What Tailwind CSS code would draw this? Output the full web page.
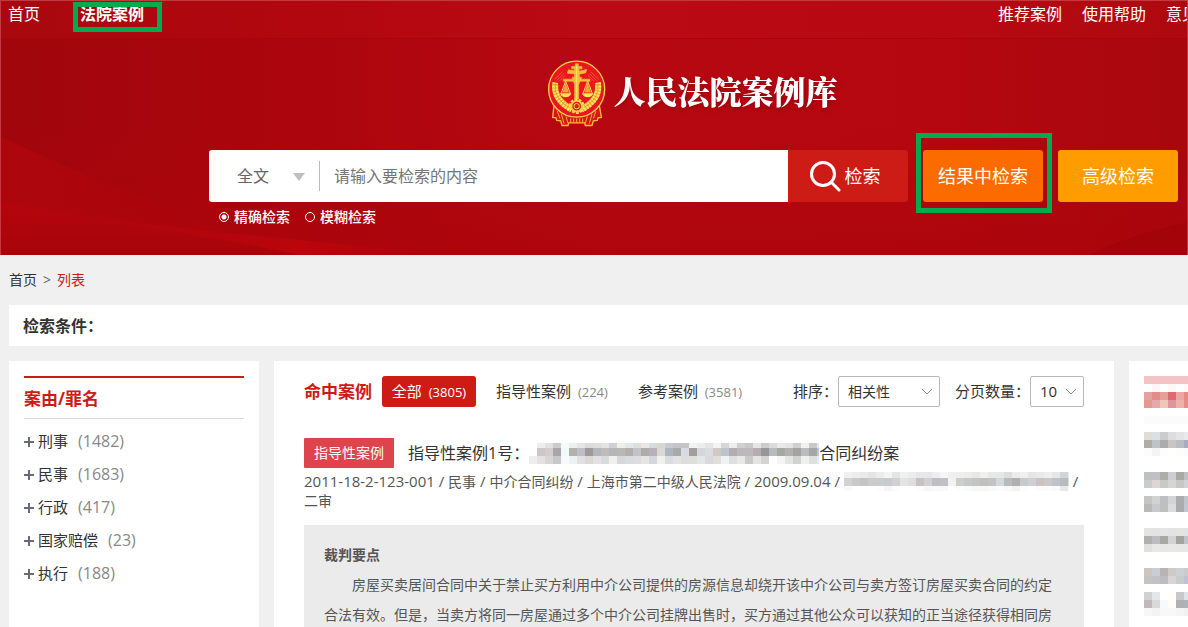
<!DOCTYPE html>
<html lang="zh-CN">
<head>
<meta charset="utf-8">
<meta name="viewport" content="width=device-width, initial-scale=1">
<title>人民法院案例库</title>
<script src="https://cdn.jsdelivr.net/npm/@tailwindcss/browser@4"></script>
</head>
<body class="flex h-screen flex-col overflow-hidden bg-[#f0f0f0] font-['Open_Sans','Noto_Sans_CJK_SC',sans-serif] text-[#333]">

<header class="relative h-[255px] shrink-0 overflow-hidden border-t border-x border-[#c13a40] bg-[#b20710] text-white">
  <svg class="absolute inset-0 h-full w-full" viewBox="0 0 1188 255" preserveAspectRatio="none" aria-hidden="true">
    <defs>
      <linearGradient id="base" x1="0" y1="0" x2="1" y2="0">
        <stop offset="0" stop-color="#a0060c"/><stop offset=".25" stop-color="#ac050d"/><stop offset=".5" stop-color="#b70812"/><stop offset=".8" stop-color="#b40710"/><stop offset="1" stop-color="#a8070e"/>
      </linearGradient>
      <linearGradient id="fall" x1="0" y1="0" x2="0" y2="1">
        <stop offset=".5" stop-color="#ab040b" stop-opacity="0"/><stop offset="1" stop-color="#ab040b" stop-opacity=".7"/>
      </linearGradient>
      <linearGradient id="fold" x1="0" y1="0" x2="1" y2="0">
        <stop offset="0" stop-color="#ae060d"/><stop offset="1" stop-color="#b0040b" stop-opacity="0"/>
      </linearGradient>
      <linearGradient id="fold2" x1="0" y1="0" x2="0" y2="1">
        <stop offset="0" stop-color="#b5050c"/><stop offset="1" stop-color="#a6050a"/>
      </linearGradient>
      <linearGradient id="fold3" x1="0" y1="0" x2="1" y2="0">
        <stop offset="0" stop-color="#b8050c" stop-opacity="0"/><stop offset=".6" stop-color="#ba050c"/><stop offset="1" stop-color="#b4050c" stop-opacity="0"/>
      </linearGradient>
    </defs>
    <rect width="1188" height="255" fill="url(#base)"/>
    <rect width="1188" height="255" fill="url(#fall)"/>
    <path d="M0 137Q90 178 190 217L290 255H0Z" fill="url(#fold)"/>
    <path d="M0 203Q120 222 240 236T440 255H0Z" fill="url(#fold2)"/>
    <path d="M60 213Q240 236 460 255H300Q200 234 60 213Z" fill="url(#fold3)"/>
    <path d="M1188 222Q1130 235 1090 255H1188Z" fill="#a2040a"/>
  </svg>

  <nav class="relative flex h-[38px] items-start justify-between border-b border-[#a5060d] bg-[#c41018]/25 text-base leading-[27px]">
    <div class="flex gap-10 pl-[7px]">
      <a href="#">首页</a>
      <a href="#" class="font-bold">法院案例</a>
    </div>
    <div class="flex gap-5">
      <a href="#">推荐案例</a>
      <a href="#">使用帮助</a>
      <a href="#" class="w-[21px] overflow-hidden whitespace-nowrap">意见</a>
    </div>
    <span class="absolute top-px left-[72px] h-[30px] w-[89px] border-5 border-[#00ab4d]"></span>
  </nav>

  <div class="relative mr-[9px] ml-[208px]">
    <div class="flex h-[111px] items-start justify-center gap-[5px] pt-[21px] pr-[3px]">
      <svg class="h-[67px] w-[62px]" viewBox="18 15 186 200" role="img" aria-label="法院徽章">
        <path d="M42 150L38 187L48 188L50 196L62 197L66 211L84 211L86 203H134L136 211L156 211L160 197L172 196L174 188L184 187L178 150Z" fill="#d9141a" stroke="#f3c23a" stroke-width="4"/>
        <path d="M52 168L60 190M64 176L72 205M78 184L84 204M92 190V203M101 190V203M110 190V203M119 190V203M128 190V203M142 184L136 204M156 176L148 205M168 168L160 190" stroke="#f0b434" stroke-width="3"/>
        <circle cx="110" cy="102" r="84" fill="#ea1620" stroke="#f8d545" stroke-width="4"/>
        <path d="M46 88Q40 132 95 162M174 88Q180 132 125 162" fill="none" stroke="#e9a534" stroke-width="19"/>
        <path d="M46 82Q38 132 95 164M174 82Q182 132 125 164" fill="none" stroke="#ffe65a" stroke-width="17" stroke-dasharray="6 3"/>
        <path d="M46 84Q38 132 95 162M174 84Q182 132 125 162" fill="none" stroke="#dc7e28" stroke-width="2"/>
        <path d="M44 72L68 50M50 76L72 55M58 78L76 60M176 72L152 50M170 76L148 55M162 78L144 60" stroke="#d8622a" stroke-width="3"/>
        <path d="M106 26H115V34H126V41H117V48L140 43L137 53L118 57V66H124V72H150V78H120L116 88V132H104V88L100 78H70V72H97V66H103V56L82 54L85 44L103 47V41H95V34H106Z" fill="#f6bc3c" stroke="#f6bc3c" stroke-width="2"/>
        <path d="M110 30V132" stroke="#ffdf58" stroke-width="4"/>
        <path d="M77 78L63 115M77 78L91 115M143 78L129 115M143 78L157 115" stroke="#ffe15a" stroke-width="3"/>
        <path d="M77 82L67 112H87ZM143 82L133 112H153Z" fill="#eca63a"/>
        <path d="M60 114H94Q90 126 77 126T60 114ZM126 114H160Q156 126 143 126T126 114Z" fill="#ffe358"/>
        <circle cx="110" cy="153" r="20" fill="none" stroke="#ffe04f" stroke-width="7" stroke-dasharray="8 4.5"/>
        <circle cx="110" cy="153" r="16" fill="#df171b" stroke="#f9cc42" stroke-width="6"/>
        <circle cx="110" cy="153" r="8" fill="#e4141c" stroke="#ffda4a" stroke-width="3"/>
      </svg>
      <h1 class="pt-2.5 font-['Noto_Serif_CJK_SC','Noto_Sans_CJK_SC',serif] text-[32px] leading-10 font-black drop-shadow-[1px_2px_2px_rgba(90,0,0,0.4)]">人民法院案例库</h1>
    </div>

    <form class="flex h-[52px]">
      <div class="flex min-w-0 flex-1 items-center rounded-l-[3px] bg-white text-base text-[#666]">
        <div class="relative flex h-[30px] w-[111px] shrink-0 items-center border-r border-[#bbb]">
          <select aria-label="检索范围" class="h-full w-full appearance-none pl-7 leading-[30px] outline-none"><option>全文</option></select>
          <svg class="pointer-events-none absolute top-3 right-3.5 h-2 w-3" viewBox="0 0 12 8"><path d="M0 0H12L6 8Z" fill="#c0c0c0"/></svg>
        </div>
        <input type="text" aria-label="检索内容" placeholder="请输入要检索的内容" class="h-full min-w-0 flex-1 px-3.5 outline-none placeholder:text-[#757575]">
      </div>
      <button type="button" class="flex w-[120px] items-center justify-center gap-1 rounded-r-[3px] bg-[#cd1b15] pr-[7px] text-lg">
        <svg class="h-8 w-8" viewBox="0 0 32 32" fill="none" stroke="#fff" stroke-width="3"><circle cx="14" cy="14" r="11.5"/><path d="M22 22L30 30" stroke-linecap="round"/></svg>
        检索
      </button>
      <div class="relative ml-[15px] flex w-[120px]">
        <button type="button" class="w-full rounded-[3px] bg-[#fc6b00] text-lg">结果中检索</button>
        <span class="pointer-events-none absolute -top-[17px] -left-[7px] h-[80px] w-[136px] border-5 border-[#00ab4d]"></span>
      </div>
      <button type="button" class="ml-[15px] w-[120px] rounded-[3px] bg-[#ff9c00] text-lg">高级检索</button>
    </form>

    <div class="flex items-center gap-[15px] pt-[5px] pl-2.5 text-sm leading-5 font-medium">
      <label class="flex items-center gap-[5px]"><input type="radio" name="mode" checked class="h-2.5 w-2.5 appearance-none rounded-full border border-white checked:bg-[radial-gradient(circle,#fff_2px,transparent_3px)]">精确检索</label>
      <label class="flex items-center gap-[5px]"><input type="radio" name="mode" class="h-2.5 w-2.5 appearance-none rounded-full border border-white checked:bg-[radial-gradient(circle,#fff_2px,transparent_3px)]">模糊检索</label>
    </div>
  </div>
</header>

<div class="flex h-[50px] shrink-0 items-center gap-1.5 pl-[9px] text-sm">
  <a href="#">首页</a><span class="text-[#666]">&gt;</span><a href="#" class="text-[#cd1b15]">列表</a>
</div>

<div class="ml-[9px] flex h-[41px] shrink-0 items-center bg-white pl-3.5 text-base font-bold">检索条件：</div>

<main class="mt-[15px] ml-[9px] flex min-h-0 flex-1 gap-[15px]">
  <aside class="w-[250px] shrink-0 bg-white p-[15px]">
    <h2 class="border-t-2 border-b border-t-[#cd1b15] border-b-[#d9d9d9] pt-1.5 pb-1 text-[17px] leading-[30px] font-bold text-[#cd1b15]">案由/罪名</h2>
    <ul id="causes" class="pt-1.5 text-[15px] leading-[33px]"></ul>
  </aside>

  <section class="min-w-0 flex-1 overflow-hidden bg-white px-[30px] pt-[15px]">
    <div class="flex h-[31px] items-center text-[15px] whitespace-nowrap">
      <h2 class="text-[17px] font-bold text-[#cd1b15]">命中案例</h2>
      <button type="button" class="ml-2.5 h-[31px] w-[94px] rounded-[3px] bg-[#cd1b15] text-white">全部 <span class="ml-[3px] text-[13px]">(3805)</span></button>
      <a href="#" class="ml-5">指导性案例 <span class="ml-[3px] text-[13px] text-[#888]">(224)</span></a>
      <a href="#" class="ml-[30px]">参考案例 <span class="ml-[3px] text-[13px] text-[#888]">(3581)</span></a>
      <div class="ml-auto flex items-center">
        <label for="sort">排序：</label>
        <div class="relative">
          <select id="sort" class="h-[31px] w-[102px] appearance-none rounded-xs border border-[#b8b8b8] pl-[9px] text-sm outline-none"><option>相关性</option></select>
          <svg class="pointer-events-none absolute top-3 right-[7px] h-2 w-3" viewBox="0 0 12 8" fill="none" stroke="#888"><path d="M1 1L6 6L11 1"/></svg>
        </div>
        <label for="size" class="ml-[15px]">分页数量：</label>
        <div class="relative">
          <select id="size" class="h-[31px] w-[54px] appearance-none rounded-xs border border-[#b8b8b8] pl-[9px] text-[15px] outline-none"><option>10</option></select>
          <svg class="pointer-events-none absolute top-3 right-[7px] h-2 w-3" viewBox="0 0 12 8" fill="none" stroke="#888"><path d="M1 1L6 6L11 1"/></svg>
        </div>
      </div>
    </div>

    <article class="mt-[31px]">
      <div class="flex h-[30px] items-center whitespace-nowrap">
        <span class="flex h-[30px] w-[90px] items-center justify-center rounded-[1px] bg-[#dd444b] text-sm text-white">指导性案例</span>
        <h3 class="ml-3.5 flex items-center text-base"><a href="#" class="flex items-center">指导性案例1号：<svg id="mask-title" class="h-[21px] w-[290px]" viewBox="0 3 290 21" aria-hidden="true"></svg>合同纠纷案</a></h3>
      </div>
      <p class="pt-1 text-[15px] leading-[19px] text-[#555]">2011-18-2-123-001 / <span class="text-sm leading-[19px]">民事</span> / <span class="text-sm leading-[19px]">中介合同纠纷</span> / <span class="text-sm leading-[19px]">上海市第二中级人民法院</span> / 2009.09.04 / <svg id="mask-meta" class="inline-block h-[19px] w-[225px] align-bottom" viewBox="0 0 225 19" aria-hidden="true"></svg> /<br><span class="text-sm leading-[19px]">二审</span></p>
      <div class="mt-[15px] bg-[#ebebeb] p-[15px_20px_20px] text-sm leading-[30px] text-[#555]">
        <h4 class="font-bold">裁判要点</h4>
        <p class="indent-7">房屋买卖居间合同中关于禁止买方利用中介公司提供的房源信息却绕开该中介公司与卖方签订房屋买卖合同的约定合法有效。但是，当卖方将同一房屋通过多个中介公司挂牌出售时，买方通过其他公众可以获知的正当途径获得相同房</p>
      </div>
    </article>
  </section>

  <aside class="w-[59px] shrink-0 bg-white pt-[15px] pl-[15px]">
    <svg id="mask-side" class="h-[240px] w-11" viewBox="0 0 44 240" aria-hidden="true"></svg>
  </aside>
</main>

<script>
// Category list
const causes = [['刑事', 1482], ['民事', 1683], ['行政', 417], ['国家赔偿', 23], ['执行', 188]];
document.getElementById('causes').innerHTML = causes.map(([name, count]) =>
  `<li class="flex items-center"><button type="button" aria-label="展开" class="mr-1"><svg class="h-2.5 w-2.5" viewBox="0 0 10 10"><path d="M5 0V10M0 5H10" stroke="#666b75" stroke-width="2"/></svg></button><a href="#">${name}</a><span class="ml-2.5 text-base leading-[33px] text-[#888]">(${count})</span></li>`).join('');

// Pixelated blocks over redacted text: each row is [y, "colour colour ..."]
function mosaic(id, rows) {
  document.getElementById(id).innerHTML = rows.map(([y, colours]) =>
    colours.split(' ').map((c, i) => `<rect x="${i * 8}" y="${y}" width="8" height="8" fill="#${c}" shape-rendering="crispEdges"/>`).join('')).join('');
}
mosaic('mask-title', [
  [0, 'fff eee e4e0de cacdce f5f9fa eeefef e2e5e7 ddd9da dddddd e3e5e3 d0d0d2 f4ede6 dfe9ee dfdfdc ebe6e6 d5dce0 d7d7d4 c8c9d0 c6c4cb c6c4c5 f1f2f1 eaeef2 e4e4e2 f4f3f2 d7d7d3 ebeef1 d0d0d0 cac9c9 e5e5e3 cccccc d8dce0 ebe9e6 e1e4e6 d0cfce f0f2f2 cbcac9 e5e6f2'],
  [8, 'fff cac7c9 d5cdca a7a5aa f0f8fa b2b1aa bfbdca 9d9a98 b1b7bc bdbcb9 b3b7ba b8b8b4 b4aead c1c3c5 acaca8 b8b0b9 dadad5 adb5be a7aaad d8dce2 a39e9d d4d6dc dadbdd d3c9c4 bbc4ca b3adb1 bcb7b9 bdb8bc b5acb1 959796 b6bcbe a6a8a6 b4b0b1 a3a3a4 bbbcbc a6a5aa c5c2d4'],
  [16, 'eeecee e5e1e1 d8d5d5 c8c7ca f6fafb eef2f4 dfe1e2 d9d8d5 e4e1e4 d7dbdd f0f0ee d7d7da d9dcdf dddde0 e7e5e4 d3d8dd f4f1ec d9dde1 e4e3e3 dedddd dededb e4e5e5 d9d9dc e0ddda eef2f2 dedfe0 e8e8e7 c9c9c8 e4e4e2 d5d3d1 ffffff f4f5f4 e3e4e4 d2d2d0 f0f0ee dfdfdd e8e8f4']
]);
mosaic('mask-meta', [
  [-2, 'f0f0f0 ececec eaeaea e4e4e4 ececea f3f4f4 e3e6e8 f0f0f0 ececec e7e7e7 e5e7ea eeeeee f6f6f6 f0f0f0 efefed ececec e7e7e7 f0f0ee e8e8e6 e5e8e9 dcdedd ececec f0f0f0 e5e5e5 e7e9eb eeeeee e6e6e6 d2d5d7 ececec'],
  [6, 'd2d2d2 ccc8c6 c5c4c4 cccbca c8cccf c9cacb d3d1cf e2e5e6 dededf c5c3c1 d3ced1 bebfc5 c1c0c6 f2f2f0 cdcdca c6c7c9 c4c4c2 bfc0bf c2c3c2 d4d8dc b9babd b2aeae c7caca cfd0d3 cbc3c0 c9c9c8 bfc2cb b9bcbd dadce0'],
  [14, 'fafafa ffffff ffffff ffffff fdfdfd f6f6f4 fcfcfc ffffff ffffff fcfcfc f7f7f7 f9f9f9 f8f8f8 ffffff fdfdfd fafafa f8f8f8 f8f8f8 fafafa fcfcfc f8f8f8 f3f3ef fcfcfc ffffff fbfbfb fcfcfc fafafa e8e8e8 fbfbfb']
]);
mosaic('mask-side', [
  [0, 'f3c3c5 f3c3c5 f3c3c5 f3c3c5 f3c3c5 f3c3c5'],
  [8, 'ffffff fff5f6 ffffff fff6f8 ffffff fff8f6'],
  [16, 'e3a19f e38d89 e5a099 db6b70 eaa7a5 e48c82'],
  [24, 'e59890 e7a8ab f0c6bb e2949d edb2ac e58e89'],
  [40, 'fbfbfb fbfbfb fbfbfb fbfbfb fbfbfb fbfbfb'],
  [56, 'dfddd8 dae1e4 cbccce dddddd e4e4e4 e9eaee'],
  [64, 'b1aca6 bdc4c9 aaadac cac5c2 babdc1 a9abc0'],
  [72, 'fcfcfc f3f4f4 fdfdfd ffffff fdfdfb fafbfd'],
  [96, 'bfc0c3 c1c1c5 adadac cccfd1 a8a8a5 bfc0c4'],
  [104, 'cacbcd dcd7d5 c9c9c6 d5d5d5 c7c8c6 d1d2d8'],
  [120, 'c5c5c2 d2d3d1 bdbfc1 d3d5d4 abacad c0c4cb'],
  [128, 'b9b9b9 c9c9cd bfbfc0 dadddb aaabab c2c6d1'],
  [152, 'e4e4e4 e3e3e3 e5e5e5 e3e3e3 e4e4e2 e2e3e5'],
  [160, 'b2b0af babdc1 a8a9a6 d2d3d4 a3a39f c0c3c9'],
  [168, 'e2e0df e8e8e7 e7e7e5 e8e8e8 e7e7e5 e7e7e7'],
  [192, 'cbc7c0 c8cdd8 b6b5b3 cecac8 ced0d1 cacbcd'],
  [200, 'c7c3c1 c1c2c8 bdbdbf d9d5d2 cacccb c0c1d3'],
  [216, 'd1d0d3 e5e6e9 ffffff fffefa c8c8ca dde3e8'],
  [224, 'c0b8bb d9d9dc f7f9fc fffdf6 afb0b2 adb3b6'],
  [232, 'f7f7f7 f3f3f3 f8f8f8 f8f8f6 f5f5f5 f1f1f1']
]);
</script>
</body>
</html>
